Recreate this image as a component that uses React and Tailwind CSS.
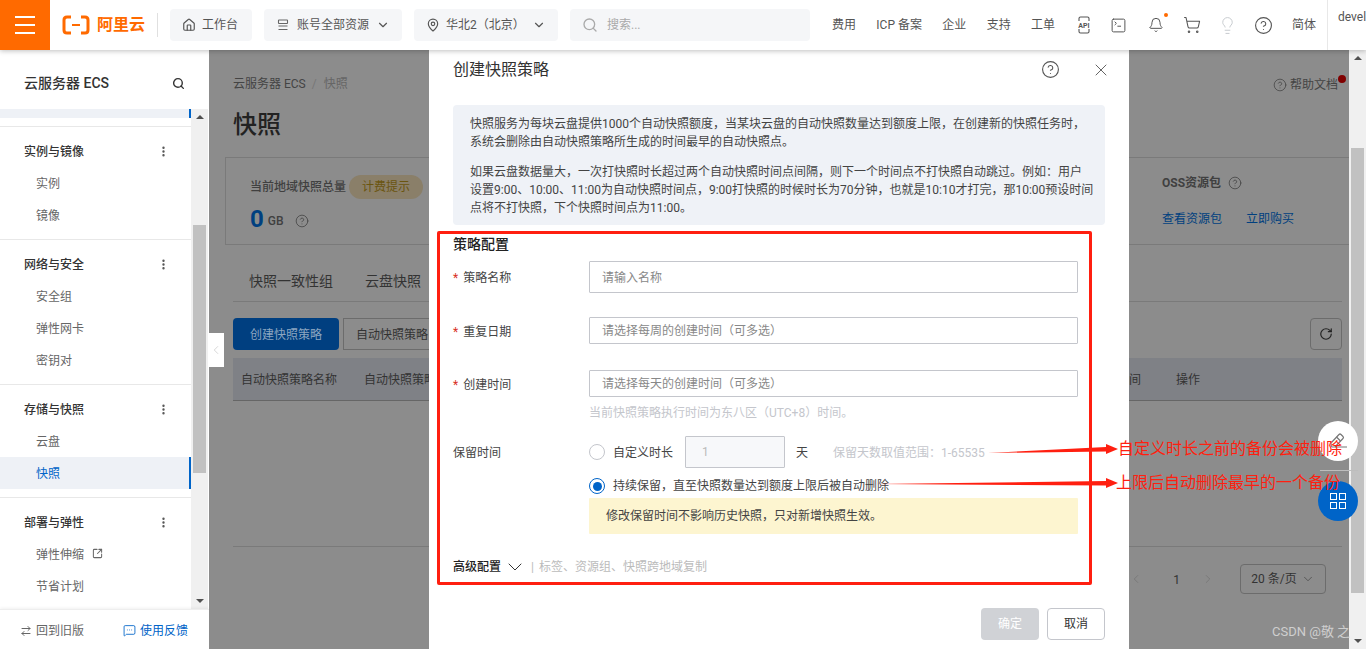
import React from "react";
import {
  House, MapPin, Search, ChevronDown, ChevronLeft, ChevronRight, SquareTerminal, Bell, ShoppingCart, Lightbulb,
  CircleHelp, RotateCw, SquareArrowOutUpRight, EllipsisVertical, ArrowRightLeft, MessageSquareMore, X,
} from "lucide-react";

const NAV = ["费用", "ICP 备案", "企业", "支持", "工单"];

const GROUPS = [
  { title: "实例与镜像", items: ["实例", "镜像"] },
  { title: "网络与安全", items: ["安全组", "弹性网卡", "密钥对"] },
  { title: "存储与快照", items: ["云盘", "快照"] },
  { title: "部署与弹性", items: ["弹性伸缩", "节省计划"] },
];

function Logo() {
  return (
    <svg width="28" height="20" viewBox="0 0 28 20" fill="none" stroke="#ff6a00" strokeWidth="3">
      <path d="M9 2H5Q2 2 2 5V15Q2 18 5 18H9" />
      <path d="M19 2H23Q26 2 26 5V15Q26 18 23 18H19" />
      <path d="M10 10H18" strokeWidth="2" />
    </svg>
  );
}

function Header() {
  return (
    <header className="relative z-30 flex h-[50px] items-center bg-white text-xs whitespace-nowrap text-[#555] shadow-[0_1px_5px_rgba(0,0,0,0.25)]">
      <div className="flex h-[50px] w-[50px] shrink-0 flex-col items-center justify-center gap-[6px] bg-[#ff6a00]">
        <div className="h-[2px] w-5 bg-white" />
        <div className="h-[2px] w-5 bg-white" />
        <div className="h-[2px] w-5 bg-white" />
      </div>
      <div className="ml-3 flex w-[95px] shrink-0 items-center gap-[7px] text-base leading-5 font-bold text-[#ff6a00]">
        <Logo />
        <span>阿里云</span>
      </div>
      <div className="h-6 w-px shrink-0 bg-[#e0e0e0]" />
      <div className="ml-3 flex h-8 w-[82px] shrink-0 items-center gap-[6px] rounded-sm bg-[#f5f6f8] pl-3">
        <House size={14} />
        <span>工作台</span>
      </div>
      <div className="ml-3 flex h-8 w-[138px] shrink-0 items-center rounded-sm bg-[#f5f6f8] pl-3">
        <svg width="14" height="14" viewBox="0 0 14 14" fill="none" stroke="#666" strokeWidth="1.1">
          <rect x="2.5" y="2" width="9" height="3.5" rx="0.5" />
          <path d="M2.5 8H11.5M2.5 11.5H11.5" />
        </svg>
        <span className="ml-[7px]">账号全部资源</span>
        <ChevronDown size={14} className="ml-[7px]" />
      </div>
      <div className="ml-3 flex h-8 w-[144px] shrink-0 items-center rounded-sm bg-[#f5f6f8] pl-3">
        <MapPin size={14} />
        <span className="ml-[6px]">华北2（北京）</span>
        <ChevronDown size={14} className="ml-[7px]" />
      </div>
      <div className="ml-3 flex h-8 w-[240px] shrink-0 items-center gap-[9px] rounded-sm bg-[#f5f6f8] pl-3 text-[#aaa]">
        <Search size={16} />
        <span>搜索...</span>
      </div>
      <div className="ml-[22px] flex w-[223px] shrink-0 justify-between">
        {NAV.map(n => <span key={n}>{n}</span>)}
      </div>
      <div className="ml-[21px] flex shrink-0 items-center">
        <svg width="16" height="18" viewBox="0 0 16 18" fill="none" stroke="#555" strokeWidth="1.1">
          <path d="M3 5V2.5Q3 1 4.5 1H11.5Q13 1 13 2.5V5M3 13V15.5Q3 17 4.5 17H11.5Q13 17 13 15.5V13" />
          <text x="8" y="11.5" textAnchor="middle" fontSize="7" fill="#555" stroke="none" fontWeight="700">API</text>
        </svg>
        <SquareTerminal size={17} strokeWidth={1.4} className="ml-[18px]" />
        <div className="relative ml-[21px]">
          <Bell size={16} strokeWidth={1.5} />
          <div className="absolute top-[-4px] right-[-4px] h-1 w-1 rounded-full bg-[#ff6a00]" />
        </div>
        <ShoppingCart size={18} strokeWidth={1.4} className="ml-[19px]" />
        <Lightbulb size={19} strokeWidth={1.2} className="ml-[17px] text-[#c4c8cc]" />
        <CircleHelp size={19} strokeWidth={1.4} className="ml-[17px]" />
      </div>
      <span className="ml-[19px] shrink-0">简体</span>
      <div className="ml-[11px] h-[50px] w-px shrink-0 bg-[#e8e8e8]" />
      <span className="mb-4 ml-[10px]">devel</span>
    </header>
  );
}

function Scrollbar({ thumb }) {
  return (
    <div className="flex h-full w-[17px] shrink-0 flex-col items-center bg-[#f0f0f0] pt-[6px]">
      <div className="h-0 w-0 border-x-[4px] border-b-[4px] border-x-transparent border-b-[#505050]" />
      <div className={thumb} />
      <div className="mt-auto mb-[6px] h-0 w-0 border-x-[4px] border-t-[4px] border-x-transparent border-t-[#505050]" />
    </div>
  );
}

function Sidebar() {
  return (
    <aside className="relative flex h-full w-[209px] shrink-0 flex-col bg-white">
      <div className="flex h-[59px] items-center justify-between pt-[7px] pr-[24px] pl-6 text-sm leading-5 font-medium text-[#333]">
        <span>云服务器 ECS</span>
        <Search size={13} strokeWidth={2.6} />
      </div>
      <div className="flex h-[500px] overflow-hidden">
        <div className="h-full w-[191px] overflow-hidden">
          <div className="h-[9px] border-r-2 border-[#0064c8] bg-[#eef1f6]" />
          <div className="h-2" />
          {GROUPS.map(g => (
            <div key={g.title} className="border-t border-[#e8e8e8] py-2 text-xs">
              <div className="flex h-8 items-center justify-between pt-[2px] pr-[21px] pl-6 font-medium text-[#333]">
                <span>{g.title}</span>
                <EllipsisVertical size={13} strokeWidth={2.4} className="mb-[2px] text-[#555]" />
              </div>
              {g.items.map(item => (
                <div
                  key={item}
                  className={item === "快照"
                    ? "flex h-8 items-center border-r-2 border-[#0064c8] bg-[#eef1f6] pt-[2px] pl-9 text-[#0064c8]"
                    : "flex h-8 items-center pt-[2px] pl-9 text-[#666]"}
                >
                  {item}
                  {item === "弹性伸缩" && <SquareArrowOutUpRight size={11} strokeWidth={2.2} className="mb-[3px] ml-2 text-[#666]" />}
                </div>
              ))}
            </div>
          ))}
        </div>
        <Scrollbar thumb="mt-[106px] h-[248px] w-[13px] shrink-0 bg-[#c1c1c1]" />
      </div>
      <div className="flex h-10 items-center border-t border-[#eee] pt-[2px] pl-5 text-xs text-[#666] shadow-[0_-1px_3px_rgba(0,0,0,0.06)]">
        <ArrowRightLeft size={12} strokeWidth={2} className="mr-1" />
        <span>回到旧版</span>
        <MessageSquareMore size={13} strokeWidth={1.6} className="mr-1 ml-[39px] text-[#0064c8]" />
        <span className="text-[#0064c8]">使用反馈</span>
      </div>
      <div className="absolute top-[283px] right-[-15px] z-10 flex h-[34px] w-4 items-center justify-center bg-white text-[#bbb]">
        <ChevronLeft size={14} strokeWidth={1} />
      </div>
    </aside>
  );
}

function MainPage() {
  return (
    <main className="relative min-w-0 flex-1 overflow-hidden bg-[#8c8c8c] pr-[7px] pl-6 text-xs text-[#333]">
      <div className="mt-[24px] -mr-[7px] flex h-5 items-center justify-between pr-[4px] text-[#444]">
        <div>
          <span>云服务器 ECS</span>
          <span className="mr-[7px] ml-[6px] text-[#777]">/</span>
          <span className="text-[#666]">快照</span>
        </div>
        <div className="relative mr-[7px] mb-[-2px] flex items-center gap-[3px]">
          <CircleHelp size={14} strokeWidth={1.3} />
          <span>帮助文档</span>
          <div className="absolute top-[-2px] right-[-8px] h-2 w-2 rounded-full bg-[#800000]" />
        </div>
      </div>
      <h1 className="mt-[15px] h-8 text-2xl leading-8 font-medium text-[#222]">快照</h1>
      <div className="mt-[16px] -mr-[7px] -ml-2 flex h-[88px] justify-between border-y border-l border-[#7a7a7a] pl-6">
        <div>
          <div className="mt-[17px] flex items-center gap-[3px]">
            <span className="font-medium text-[#404040]">当前地域快照总量</span>
            <span className="flex h-6 w-[74px] items-center justify-center rounded-full bg-[#8a7f69] text-[#6a5510]">计费提示</span>
          </div>
          <div className="mt-[4px] flex items-center">
            <span className="text-2xl leading-8 font-bold text-[#004080]">0</span>
            <span className="mt-1 ml-1 text-xs font-medium text-[#404040]">GB</span>
            <CircleHelp size={14} strokeWidth={1.3} className="mt-1 ml-[11px] text-[#404040]" />
          </div>
        </div>
        <div className="w-[187px]">
          <div className="mt-[17px] flex items-center gap-[7px]">
            <span className="font-bold text-[#404040]">OSS资源包</span>
            <CircleHelp size={14} strokeWidth={1.3} className="text-[#404040]" />
          </div>
          <div className="mt-[20px] flex gap-6 text-[#00407f]">
            <span>查看资源包</span>
            <span>立即购买</span>
          </div>
        </div>
      </div>
      <div className="flex h-[57px] items-center border-b border-[#7a7a7a] pt-[15px] text-sm text-[#333]">
        <span className="px-4">快照一致性组</span>
        <span className="px-4">云盘快照</span>
      </div>
      <div className="mt-4 flex h-8 justify-between">
        <div className="flex gap-1">
          <button className="h-8 w-[106px] rounded-sm bg-[#003f80] pt-px text-[#8ca6c0]">创建快照策略</button>
          <button className="h-8 w-[98px] border border-[#6c6c6c] pt-px text-[#333]">自动快照策略</button>
        </div>
        <button className="flex h-8 w-8 items-center justify-center rounded-sm border border-[#6c6c6c] text-[#222]">
          <RotateCw size={14} strokeWidth={2} />
        </button>
      </div>
      <div className="mt-2 flex h-[43px] items-center border-b border-[#666] bg-[#7f8186] pt-[2px] pl-2 text-[#333]">
        <span className="w-[123px]">自动快照策略名称</span>
        <span>自动快照策略</span>
        <span className="mr-[35px] ml-auto">时间</span>
        <span className="w-[166px]">操作</span>
      </div>
      <div className="h-[146px] border-b border-[#7a7a7a]" />
      <div className="mt-[17px] flex h-[30px] items-center justify-end pr-4 text-[#333]">
        <ChevronLeft size={14} strokeWidth={1} className="text-[#6c6c6c]" />
        <span className="mr-[21px] ml-[30px] pt-[2px]">1</span>
        <ChevronRight size={14} strokeWidth={1} className="text-[#6c6c6c]" />
        <div className="ml-[25px] flex h-[30px] w-[86px] items-center justify-center gap-1 rounded-sm border border-[#6c6c6c]">
          <span>20 条/页</span>
          <ChevronDown size={14} strokeWidth={1} />
        </div>
      </div>
    </main>
  );
}

function Radio({ checked }) {
  return checked ? (
    <div className="flex h-4 w-4 shrink-0 items-center justify-center rounded-full border border-[#0064c8]">
      <div className="h-[9px] w-[9px] rounded-full bg-[#0064c8]" />
    </div>
  ) : (
    <div className="h-4 w-4 shrink-0 rounded-full border border-[#c4c6cc]" />
  );
}

function FormRow({ label, height, top, placeholder }) {
  return (
    <div className={`mr-[27px] flex items-center ${top}`}>
      <div className="w-[136px] pt-[2px] text-[#444]">
        <span className="mr-[5px] text-[#d93026]">*</span>
        {label}
      </div>
      <div className={`flex flex-1 items-center rounded-[1px] border border-[#c4c6cc] pt-px pl-3 text-[#888] ${height}`}>{placeholder}</div>
    </div>
  );
}

function Modal() {
  return (
    <section className="absolute top-[50px] left-[429px] z-20 h-[599px] w-[700px] bg-white px-6 text-xs text-[#333]">
      <div className="flex h-[38px] items-center pt-px text-base text-[#333]">
        <span>创建快照策略</span>
        <CircleHelp size={19} strokeWidth={1.4} className="mr-[31px] ml-auto text-[#555]" />
        <X size={20} strokeWidth={1} className="mr-[-6px] text-[#444]" />
      </div>
      <div className="mt-[17px] h-[120px] rounded-sm bg-[#eff2f7] px-[17px] pt-[10px] leading-[18px] whitespace-nowrap text-[#444]">
        <p>快照服务为每块云盘提供1000个自动快照额度，当某块云盘的自动快照数量达到额度上限，在创建新的快照任务时，</p>
        <p>系统会删除由自动快照策略所生成的时间最早的自动快照点。</p>
        <p className="mt-3">如果云盘数据量大，一次打快照时长超过两个自动快照时间点间隔，则下一个时间点不打快照自动跳过。例如：用户</p>
        <p>设置9:00、10:00、11:00为自动快照时间点，9:00打快照的时候时长为70分钟，也就是10:10才打完，那10:00预设时间</p>
        <p>点将不打快照，下个快照时间点为11:00。</p>
      </div>
      <h3 className="mt-[9px] h-5 text-sm leading-5 font-medium text-[#222]">策略配置</h3>
      <FormRow label="策略名称" height="h-8" top="mt-[7px]" placeholder="请输入名称" />
      <FormRow label="重复日期" height="h-[27px]" top="mt-6" placeholder="请选择每周的创建时间（可多选）" />
      <FormRow label="创建时间" height="h-[27px]" top="mt-[26px]" placeholder="请选择每天的创建时间（可多选）" />
      <div className="mt-[6px] h-5 pl-[136px] leading-5 text-[#c4c6cc]">当前快照策略执行时间为东八区（UTC+8）时间。</div>
      <div className="mt-[13px] flex items-center">
        <div className="w-[136px] pt-px text-[#444]">保留时间</div>
        <Radio />
        <span className="ml-2 pt-px text-[#444]">自定义时长</span>
        <div className="ml-3 flex h-8 w-[100px] items-center rounded-[1px] border border-[#c4c6cc] bg-[#f7f8fa] pl-4 text-[#bbb]">1</div>
        <span className="ml-[11px] pt-px text-[#444]">天</span>
        <span className="ml-[25px] pt-px text-[#c4c6cc]">保留天数取值范围：1-65535</span>
      </div>
      <div className="mt-[10px] flex items-center pl-[136px] text-[#444]">
        <Radio checked />
        <span className="ml-2">持续保留，直至快照数量达到额度上限后被自动删除</span>
      </div>
      <div className="mt-[4px] mr-[27px] ml-[136px] flex h-9 items-center rounded-[1px] bg-[#fdf5d0] pl-[17px] text-[#444]">修改保留时间不影响历史快照，只对新增快照生效。</div>
      <div className="mt-[23px] flex h-5 items-center">
        <span className="font-medium text-[#222]">高级配置</span>
        <ChevronDown size={24} strokeWidth={1} className="ml-[2px] text-[#333]" />
        <span className="mr-[5px] ml-[4px] text-[#bbb]">|</span>
        <span className="text-[#bbb]">标签、资源组、快照跨地域复制</span>
      </div>
      <div className="mt-[31px] flex justify-end gap-2">
        <button className="h-8 w-[58px] rounded-sm bg-[#d0d2d6] text-white">确定</button>
        <button className="h-8 w-[58px] rounded-sm border border-[#c4c6cc] bg-white text-[#333]">取消</button>
      </div>
    </section>
  );
}

function FloatingButtons() {
  return (
    <>
      <div className="absolute top-[421px] left-[1318px] z-20 flex h-10 w-10 items-center justify-center rounded-full bg-white">
        <svg width="20" height="20" viewBox="0 0 20 20" fill="none" stroke="#777" strokeWidth="1.2">
          <path d="M3 12L11 3.5Q12 2.5 13 3.5L15 5.5Q16 6.5 15 7.5L7 16H4L3 14.5Z" />
          <path d="M8.5 6L12.5 10M7 16H19" />
        </svg>
      </div>
      <div className="absolute top-[470px] left-[1320px] z-20 h-px w-[38px] bg-[#bdbdbd]" />
      <div className="absolute top-[481px] left-[1318px] z-20 grid h-10 w-10 grid-cols-[7px_7px] content-center justify-center gap-[2px] rounded-full bg-[#0064c8]">
        <div className="h-[7px] w-[7px] border border-white" />
        <div className="h-[7px] w-[7px] border border-white" />
        <div className="h-[7px] w-[7px] border border-white" />
        <div className="h-[7px] w-[7px] border border-white" />
      </div>
    </>
  );
}

function Annotations() {
  return (
    <>
      <div className="pointer-events-none absolute top-[231px] left-[437px] z-20 h-[354px] w-[655px] rounded-[2px] border-[3px] border-[#ff1f10]" />
      <svg className="pointer-events-none absolute top-0 left-0 z-20" width="1366" height="649" fill="#ff1f10">
        <polygon points="988,453 1106,447 1106,451.5" />
        <polygon points="1106,444 1118,449 1106,454" />
        <polygon points="875,484 1106,481 1106,485.5" />
        <polygon points="1106,478 1118,483 1106,488" />
      </svg>
      <div className="absolute top-[439px] left-[1118px] z-20 text-base leading-5 whitespace-nowrap text-[#ff1f10]">自定义时长之前的备份会被删除</div>
      <div className="absolute top-[473px] left-[1116px] z-20 text-base leading-5 whitespace-nowrap text-[#ff1f10]">上限后自动删除最早的一个备份</div>
      <div className="absolute top-[623px] left-[1272px] z-20 text-[13px] leading-[18px] whitespace-nowrap text-[#cfcfcf]">CSDN @敬 之</div>
    </>
  );
}

export default function App() {
  return (
    <div className="relative h-[649px] w-[1366px] overflow-hidden bg-white font-['Roboto','Noto_Sans_CJK_SC',sans-serif]">
      <Header />
      <div className="flex h-[599px]">
        <Sidebar />
        <MainPage />
        <Scrollbar thumb="mt-[88px] h-[445px] w-[13px] shrink-0 bg-[#c1c1c1]" />
      </div>
      <Modal />
      <FloatingButtons />
      <Annotations />
    </div>
  );
}
